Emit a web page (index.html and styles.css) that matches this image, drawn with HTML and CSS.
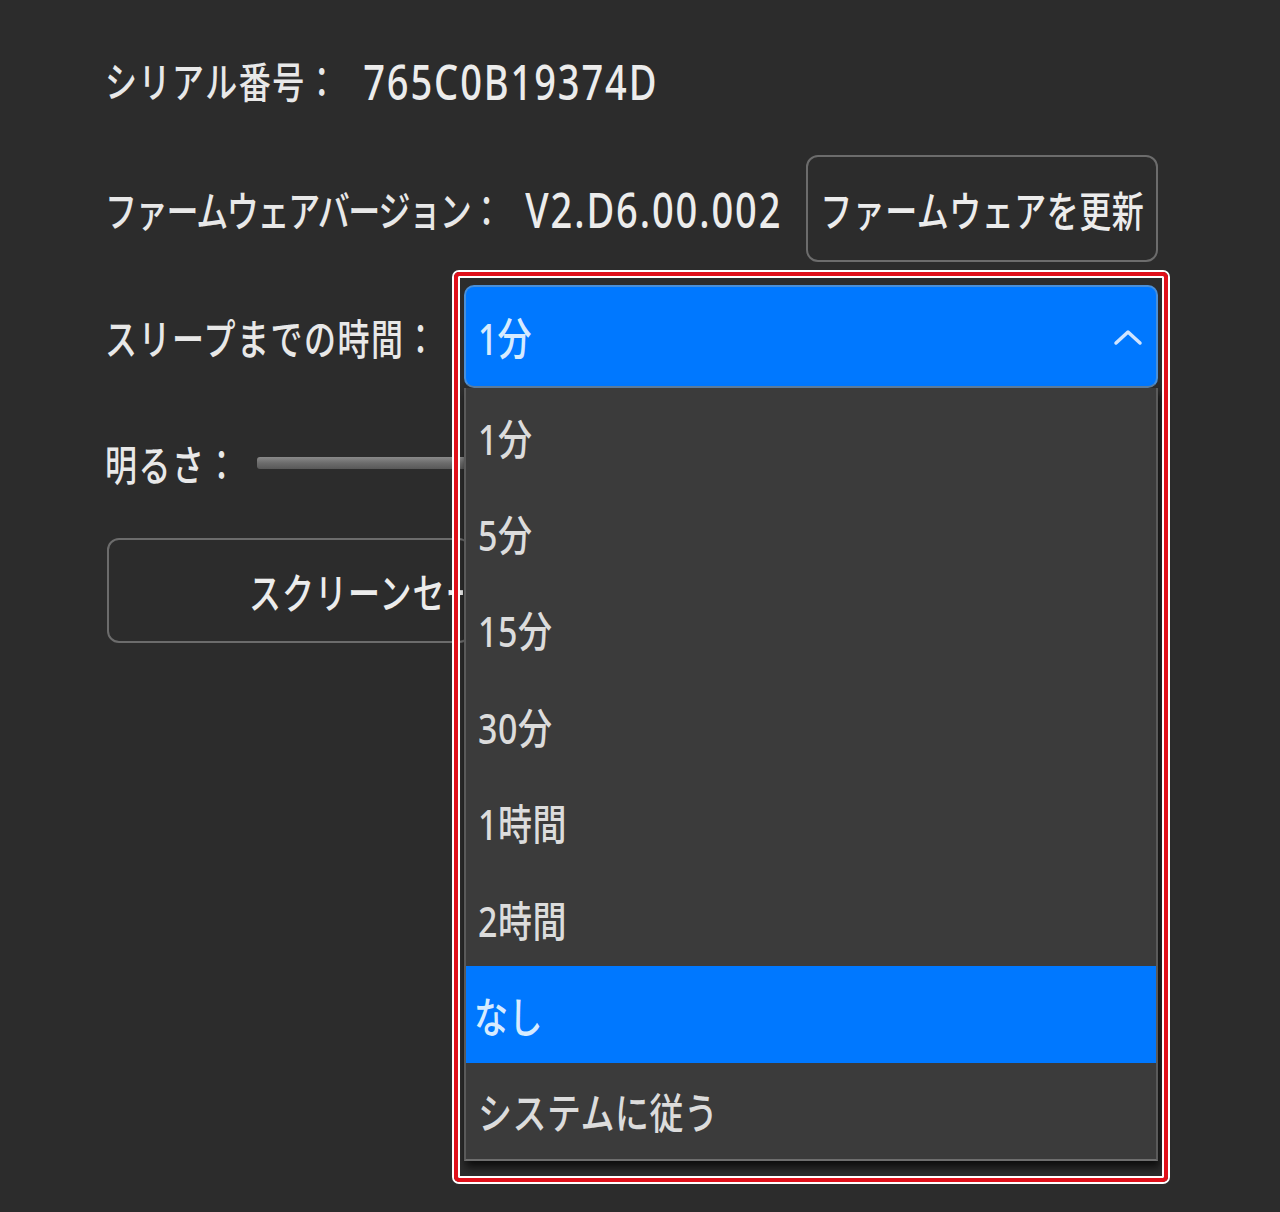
FILE: index.html
```html
<!DOCTYPE html>
<html lang="ja">
<head>
<meta charset="utf-8">
<title>設定</title>
<link rel="stylesheet" href="styles.css">
</head>
<body>
<div class="panel">
  <div class="row r1">
    <span class="label tx">シリアル番号：</span>
    <span class="value tx">765C0B19374D</span>
  </div>
  <div class="row r2">
    <span class="label narrow tx">ファームウェアバージョン：</span>
    <span class="value tx">V2.D6.00.002</span>
    <button class="btn fw"><span class="tx">ファームウェアを更新</span></button>
  </div>
  <div class="row r3">
    <span class="label tx">スリープまでの時間：</span>
    <div class="combo-wrap">
      <div class="combo">
        <span class="tx">1分</span>
        <svg class="chev" width="30" height="18" viewBox="0 0 30 18"><polyline points="3,15 15,4 27,15" fill="none" stroke="#cfe4ff" stroke-width="3.5" stroke-linecap="round" stroke-linejoin="round"/></svg>
      </div>
      <ul class="list">
        <li><span class="tx">1分</span></li>
        <li><span class="tx">5分</span></li>
        <li><span class="tx">15分</span></li>
        <li><span class="tx">30分</span></li>
        <li><span class="tx">1時間</span></li>
        <li><span class="tx">2時間</span></li>
        <li class="sel"><span class="tx">なし</span></li>
        <li><span class="tx">システムに従う</span></li>
      </ul>
      <div class="annot"></div>
    </div>
  </div>
  <div class="row r4">
    <span class="label tx">明るさ：</span>
    <div class="slider"><div class="track"></div></div>
  </div>
  <div class="row r5">
    <button class="btn ss"><span class="tx">スクリーンセーバー</span></button>
  </div>
</div>
</body>
</html>
```
FILE: styles.css
```css
html, body {
  margin: 0;
  padding: 0;
  background: #2c2c2c;
}
body {
  width: 1280px;
  height: 1212px;
  overflow: hidden;
  font-family: "Noto Sans", "Noto Sans CJK JP", sans-serif;
  color: #e8e8e8;
}
.panel {
  display: flex;
  flex-direction: column;
  gap: 23px;
  padding: 28px 0 0 105px;
  width: 1053px;
}
.row {
  display: flex;
  align-items: center;
  height: 104px;
}
.r2 { height: 107px; }
.r3 { height: 103px; }
.r5 { height: 105px; }

.tx {
  display: inline-block;
  transform: scaleY(1.3);
  white-space: nowrap;
}
.label {
  font-family: "Noto Sans CJK JP", sans-serif;
  font-size: 32px;
  font-weight: 500;
  letter-spacing: 1.5px;
  margin-right: 24px;
  flex: none;
}
.label.narrow {
  letter-spacing: -1.3px;
}
.value {
  font-family: "Noto Sans", sans-serif;
  font-size: 38px;
  font-weight: 500;
  letter-spacing: 1.9px;
  color: #ececec;
}
.btn {
  background: #2c2c2c;
  border: 2px solid #6c6c6c;
  border-radius: 12px;
  color: #ececec;
  font-family: "Noto Sans CJK JP", sans-serif;
  font-size: 32px;
  font-weight: 500;
  letter-spacing: 0.5px;
  padding: 0 6px;
  display: flex;
  align-items: center;
  justify-content: center;
  height: 100%;
}
.fw {
  margin-left: 24px;
  width: 352px;
}
.ss {
  width: 364px;
  margin-left: 2px;
  letter-spacing: 1px;
  justify-content: flex-start;
  padding-left: 140px;
  overflow: hidden;
}
.ss .tx {
  max-width: 214px;
  overflow: hidden;
}

.combo-wrap {
  position: relative;
  flex: 1;
  height: 100%;
  margin-left: 2px;
}
.combo {
  height: 100%;
  box-sizing: border-box;
  background: #0078ff;
  border: 2px solid #4a8fd8;
  border-bottom-color: #5f7fa0;
  border-radius: 10px;
  display: flex;
  align-items: center;
  justify-content: space-between;
  padding: 0 13px 0 12px;
  color: #d6ebff;
  font-size: 34px;
  font-weight: 500;
}
.chev { display: block; }

.list {
  position: absolute;
  top: 100%;
  left: 0;
  right: 0;
  margin: 0;
  padding: 0;
  list-style: none;
  background: #3b3b3b;
  border: 2px solid #5a5a5a;
  border-top: none;
  border-bottom-color: #6e6e6e;
  box-shadow: 2px 6px 8px rgba(0, 0, 0, 0.7);
  z-index: 2;
}
.list li {
  height: 96.4px;
  display: flex;
  align-items: center;
  padding-left: 12px;
  font-size: 34px;
  font-weight: 500;
  letter-spacing: 0.5px;
  color: #dcdcdc;
}
.list li .tx { transform: scaleY(1.25); }
.list li.sel {
  background: #0078ff;
  color: #d6ebff;
  padding-left: 8px;
}
.annot {
  position: absolute;
  top: -13px;
  left: -10px;
  width: 714px;
  height: 910px;
  box-sizing: border-box;
  border: 4px solid #e0101a;
  border-radius: 5px;
  box-shadow: 0 0 0 2px #ffffff, inset 0 0 0 2px #ffffff;
  z-index: 3;
  pointer-events: none;
}

.slider {
  flex: 1;
  margin-left: -6px;
  display: flex;
  align-items: center;
}
.track {
  width: 100%;
  height: 12px;
  border-radius: 3px;
  background: linear-gradient(#8a8a8a 0%, #6c6c6c 50%, #585858 100%);
}
```
